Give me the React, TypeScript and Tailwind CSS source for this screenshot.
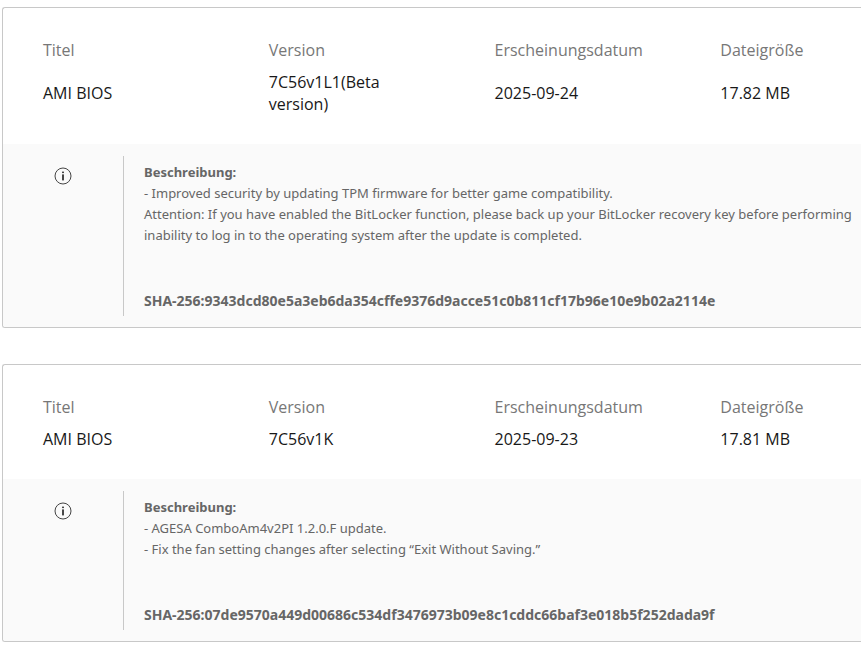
type BiosRelease = {
  title: string;
  version: string;
  date: string;
  size: string;
  notes: string[];
  sha256: string;
};

const releases: BiosRelease[] = [
  {
    title: "AMI BIOS",
    version: "7C56v1L1(Beta version)",
    date: "2025-09-24",
    size: "17.82 MB",
    notes: [
      "- Improved security by updating TPM firmware for better game compatibility.",
      "Attention: If you have enabled the BitLocker function, please back up your BitLocker recovery key before performing",
      "inability to log in to the operating system after the update is completed.",
    ],
    sha256: "9343dcd80e5a3eb6da354cffe9376d9acce51c0b811cf17b96e10e9b02a2114e",
  },
  {
    title: "AMI BIOS",
    version: "7C56v1K",
    date: "2025-09-23",
    size: "17.81 MB",
    notes: [
      "- AGESA ComboAm4v2PI 1.2.0.F update.",
      "- Fix the fan setting changes after selecting “Exit Without Saving.”",
    ],
    sha256: "07de9570a449d00686c534df3476973b09e8c1cddc66baf3e018b5f252dada9f",
  },
];

function InfoIcon() {
  return (
    <svg viewBox="0 0 18 18" className="size-[18px]" fill="none" aria-hidden="true">
      <circle cx="9" cy="9" r="8" stroke="#444" strokeWidth="1" />
      <rect x="8.1" y="4.6" width="1.8" height="1.5" fill="#333" />
      <rect x="8.1" y="7.4" width="1.8" height="6" fill="#333" />
    </svg>
  );
}

function ReleaseCard({ release }: { release: BiosRelease }) {
  return (
    <section className="rounded-l-[3px] border border-r-0 border-[#c8c8c8] overflow-hidden">
      <div className="pt-[31px] pb-[29px]">
        <table className="w-full table-fixed text-left text-base leading-[22px]">
          <thead>
            <tr className="text-[#777]">
              <th className="w-5/19 pl-10 pr-8 pb-2.5 font-normal">Titel</th>
              <th className="w-5/19 pl-10 pr-8 pb-2.5 font-normal">Version</th>
              <th className="w-5/19 pl-10 pb-2.5 font-normal">Erscheinungsdatum</th>
              <th className="pl-10 pb-2.5 font-normal">Dateigröße</th>
            </tr>
          </thead>
          <tbody>
            <tr className="align-middle text-[#181818]">
              <td className="pl-10 pr-8">{release.title}</td>
              <td className="pl-10 pr-8">{release.version}</td>
              <td className="pl-10">{release.date}</td>
              <td className="pl-10">{release.size}</td>
            </tr>
          </tbody>
        </table>
      </div>

      <div className="flex bg-[#fafafa] pt-3 pb-[11px]">
        <div className="flex w-30 shrink-0 justify-center pt-[11px]">
          <InfoIcon />
        </div>
        <div className="min-w-0 flex-1 border-l border-[#c8c8c8] pl-5 pt-1.5 pb-[5px] font-['Noto_Sans',sans-serif] text-[13px] leading-[21px] text-[#666]">
          <h3 className="font-bold">Beschreibung:</h3>
          {release.notes.map((line) => (
            <p key={line} className="sm:whitespace-nowrap">
              {line}
            </p>
          ))}
          <p className="mt-11 text-[14px] leading-[21px] font-bold break-all">SHA-256:{release.sha256}</p>
        </div>
      </div>
    </section>
  );
}

export default function App() {
  return (
    <main className="flex flex-col gap-9 bg-white pt-[7px] pb-1.5 pl-0.5 font-['Open_Sans','Noto_Sans',sans-serif]">
      {releases.map((release) => (
        <ReleaseCard key={release.version} release={release} />
      ))}
    </main>
  );
}
